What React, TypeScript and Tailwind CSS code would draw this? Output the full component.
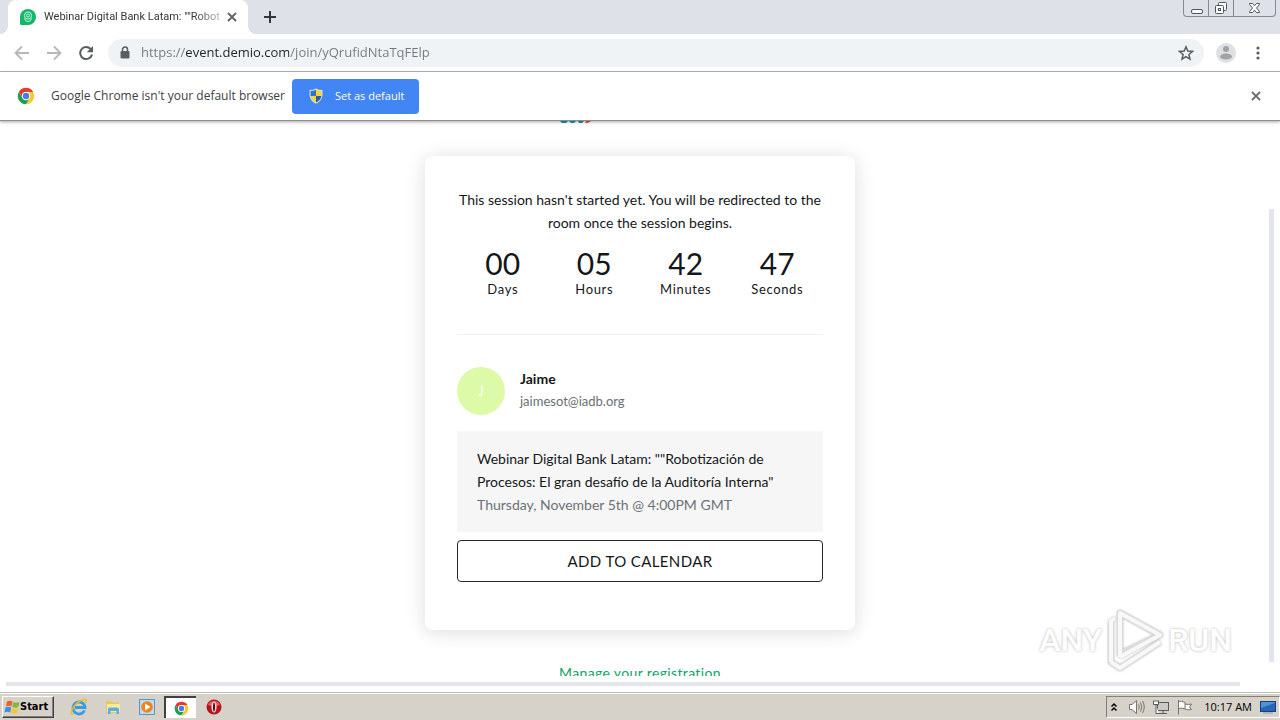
import React from "react";

const UI = "font-['Open_Sans','Noto_Sans',sans-serif]";

function ChromeLogo({ className }: { className: string }) {
  const sector = "M43.05 13H24A11 11 0 0 0 14.47 29.5L4.95 13A22 22 0 0 1 43.05 13Z";
  return (
    <svg viewBox="0 0 48 48" className={className} aria-hidden="true">
      <path d={sector} fill="#e33b2e" />
      <path d={sector} fill="#fcc934" transform="rotate(120 24 24)" />
      <path d={sector} fill="#1e9e50" transform="rotate(240 24 24)" />
      <circle cx="24" cy="24" r="11" fill="#fff" />
      <circle cx="24" cy="24" r="8.5" fill="#3f7fec" />
    </svg>
  );
}

function Cross({ className }: { className: string }) {
  return (
    <svg viewBox="0 0 10 10" className={className} fill="none" stroke="currentColor" strokeWidth="1.800" aria-hidden="true">
      <path d="M1 1L9 9M9 1L1 9" />
    </svg>
  );
}

function TabStrip() {
  return (
    <header className="flex h-[34px] shrink-0 bg-[#dee1e8]">
      <svg viewBox="0 0 8 8" className="size-2 self-end" aria-hidden="true">
        <path d="M8 0V8H0A8 8 0 0 0 8 0Z" fill="#fff" />
      </svg>
      <div className="flex w-60 items-center rounded-t-lg bg-white pl-3 pr-2.5">
        <svg viewBox="0 0 16 16" className="size-4 shrink-0" aria-hidden="true">
          <path d="M8 0A8 8 0 1 1 8 16H1.5Q0 16 0 14.500V8A8 8 0 0 1 8 0Z" fill="#12b76a" />
          <circle cx="8" cy="6.500" r="3.600" fill="none" stroke="#c9f2dc" strokeWidth="1" />
          <circle cx="8" cy="6.500" r="1.500" fill="none" stroke="#c9f2dc" strokeWidth="1" />
          <path d="M4.500 9.500Q5 12.500 8 12.500T11.500 9.500" fill="none" stroke="#c9f2dc" strokeWidth="1" />
        </svg>
        <span className="ml-2 whitespace-nowrap font-['Roboto',sans-serif] text-[11px] text-[#35363a] [mask-image:linear-gradient(to_right,#000_85%,rgba(0,0,0,0.3))]">
          Webinar Digital Bank Latam: ""Robot
        </span>
        <button type="button" aria-label="Close tab" className="ml-auto flex size-3 shrink-0 items-center justify-center text-[#5f6368]">
          <Cross className="size-2.5" />
        </button>
      </div>
      <svg viewBox="0 0 8 8" className="size-2 self-end" aria-hidden="true">
        <path d="M0 0V8H8A8 8 0 0 1 0 0Z" fill="#fff" />
      </svg>
      <button type="button" aria-label="New tab" className="ml-2 flex size-3 self-center text-[#35363a]">
        <svg viewBox="0 0 12 12" className="size-3" stroke="currentColor" strokeWidth="2" aria-hidden="true">
          <path d="M6 0V12M0 6H12" />
        </svg>
      </button>
      <div className="ml-auto mr-1 flex h-[17px] rounded-b border border-t-0 border-[#858a94] text-[#50545e]">
        <button type="button" aria-label="Minimize" className="flex w-[25px] items-center justify-center border-r border-[#858a94]">
          <svg viewBox="0 0 13 13" className="size-[13px]" aria-hidden="true">
            <rect x="1.500" y="7.500" width="11" height="4" rx="1.500" fill="#fff" stroke="currentColor" />
          </svg>
        </button>
        <button type="button" aria-label="Restore" className="flex w-[25px] items-center justify-center border-r border-[#858a94]">
          <svg viewBox="0 0 14 14" className="size-3.5" fill="#fff" stroke="currentColor" aria-hidden="true">
            <rect x="4.500" y="1.500" width="8" height="8" rx="1" />
            <rect x="1.500" y="4.500" width="8" height="8" rx="1" />
            <rect x="4.500" y="7.500" width="2" height="2" />
          </svg>
        </button>
        <button type="button" aria-label="Close" className="flex w-[41px] items-center justify-center">
          <svg viewBox="0 0 13 12" className="h-3 w-[13px]" fill="#fff" stroke="currentColor" aria-hidden="true">
            <path d="M1.500 1.500H4.500L6.500 3.800L8.500 1.500H11.500V2.500L8.500 6L11.500 9.500V10.500H8.500L6.500 8.200L4.500 10.500H1.500V9.500L4.500 6L1.500 2.500Z" />
          </svg>
        </button>
      </div>
    </header>
  );
}

function Toolbar() {
  return (
    <nav className="flex h-[38px] shrink-0 items-center border-b border-[#b4b7ba] bg-white px-3.5">
      <button type="button" aria-label="Back" className="text-[#b5b7ba]">
        <svg viewBox="0 0 16 16" className="size-4" fill="none" stroke="currentColor" strokeWidth="1.800" aria-hidden="true">
          <path d="M15 8H2M8 1.500L1.500 8L8 14.500" />
        </svg>
      </button>
      <button type="button" aria-label="Forward" className="ml-4 text-[#b5b7ba]">
        <svg viewBox="0 0 16 16" className="size-4" fill="none" stroke="currentColor" strokeWidth="1.800" aria-hidden="true">
          <path d="M1 8H14M8 1.500L14.500 8L8 14.500" />
        </svg>
      </button>
      <button type="button" aria-label="Reload" className="ml-4 text-[#5a5d61]">
        <svg viewBox="0 0 16 16" className="size-4" aria-hidden="true">
          <path d="M12.600 4A6 6 0 1 0 14 9.500" fill="none" stroke="currentColor" strokeWidth="2" />
          <path d="M15 1V7.200H8.800Z" fill="currentColor" />
        </svg>
      </button>
      <div className="ml-3.5 flex h-7 flex-1 items-center rounded-full bg-[#f0f3f5] pl-3 pr-2.5">
        <svg viewBox="0 0 10 13" className="h-[13px] w-2.5" aria-hidden="true">
          <rect x="0.500" y="5" width="9" height="7.500" rx="1" fill="#5a5d61" />
          <path d="M2.500 5.500V3.500A2.500 2.500 0 0 1 7.500 3.500V5.500" fill="none" stroke="#5a5d61" strokeWidth="1.500" />
        </svg>
        <input
          type="text"
          aria-label="Address"
          defaultValue="https://event.demio.com/join/yQrufidNtaTqFElp"
          className="ml-[11px] min-w-0 flex-1 bg-[linear-gradient(to_right,#74787d_44px,#202124_44px,#202124_148px,#74787d_148px)] bg-clip-text text-[13px] text-[#74787d] outline-none [-webkit-text-fill-color:transparent]"
        />
        <button type="button" aria-label="Bookmark this page" className="text-[#5a5d61]">
          <svg viewBox="0 0 16 16" className="size-4" fill="none" stroke="currentColor" strokeWidth="1.500" aria-hidden="true">
            <path d="M8 1.800L9.800 6.100L14.500 6.500L10.900 9.500L12 14.100L8 11.600L4 14.100L5.100 9.500L1.500 6.500L6.200 6.100Z" />
          </svg>
        </button>
      </div>
      <button type="button" aria-label="Profile" className="ml-3">
        <svg viewBox="0 0 20 20" className="size-5" aria-hidden="true">
          <circle cx="10" cy="10" r="10" fill="#dfe0e2" />
          <circle cx="10" cy="6" r="3" fill="#a0a2a5" />
          <ellipse cx="10" cy="13.500" rx="6" ry="3" fill="#a0a2a5" />
        </svg>
      </button>
      <button type="button" aria-label="Menu" className="ml-3.5 text-[#5a5d61]">
        <svg viewBox="0 0 16 16" className="size-4" fill="currentColor" aria-hidden="true">
          <circle cx="8" cy="3" r="1.600" />
          <circle cx="8" cy="8" r="1.600" />
          <circle cx="8" cy="13" r="1.600" />
        </svg>
      </button>
    </nav>
  );
}

function InfoBar() {
  return (
    <div className="z-10 flex h-[49px] shrink-0 items-center border-b border-[#8f8f8f] bg-white pl-[17px] pr-[19px] shadow-[0_1px_3px_rgba(0,0,0,0.35)]">
      <ChromeLogo className="size-[18px]" />
      <p className="ml-4 text-xs text-[#3c4043]">Google Chrome isn't your default browser</p>
      <button type="button" className="ml-[7px] flex h-[35px] w-[127px] items-center rounded bg-[#4285f4] pl-4 text-[11px] text-white">
        <svg viewBox="0 0 16 16" className="mr-[11px] size-4" aria-hidden="true">
          <path d="M8 0.500Q11 2 14.500 2V7Q14 13 8 15.800Q2 13 1.500 7V2Q5 2 8 0.500Z" fill="#dcdfd6" />
          <path d="M8 1.800V8H2.600V3Q5.500 3 8 1.800Z" fill="#2f74c8" />
          <path d="M8 1.800Q10.500 3 13.400 3V8H8Z" fill="#f8d33a" />
          <path d="M2.600 8H8V14.500Q3.200 12 2.600 8Z" fill="#f8d33a" />
          <path d="M8 8H13.400Q12.800 12 8 14.500Z" fill="#2560a8" />
        </svg>
        Set as default
      </button>
      <button type="button" aria-label="Dismiss" className="ml-auto text-[#6a6d70]">
        <Cross className="size-2.5" />
      </button>
    </div>
  );
}

const countdown = [
  { value: "00", label: "Days" },
  { value: "05", label: "Hours" },
  { value: "42", label: "Minutes" },
  { value: "47", label: "Seconds" },
];

function SessionCard() {
  return (
    <section className="w-full max-w-[430px] shrink-0 rounded-lg bg-white px-8 pb-12 pt-8 shadow-[0_2px_20px_rgba(0,0,0,0.14)]">
      <p className="text-center">This session hasn't started yet. You will be redirected to the room once the session begins.</p>
      <div className="mt-[13px] flex text-center">
        {countdown.map((c) => (
          <div key={c.label} className="flex-1">
            <div className="text-[30px] leading-8">{c.value}</div>
            <div className="text-[13px] leading-5 tracking-wider">{c.label}</div>
          </div>
        ))}
      </div>
      <hr className="mt-[35px] border-[#f0f0f0]" />
      <div className="mt-8 flex h-12 items-start">
        <span className="flex size-12 items-center justify-center rounded-full bg-[#dcfaa8] text-[13px] text-white">J</span>
        <div className="ml-[15px]">
          <div className="font-bold">Jaime</div>
          <div className="text-[13px] text-[#6b6f73]">jaimesot@iadb.org</div>
        </div>
      </div>
      <div className="mt-4 bg-[#f6f6f6] px-5 py-4">
        <h1>Webinar Digital Bank Latam: ""Robotización de Procesos: El gran desafío de la Auditoría Interna"</h1>
        <p className="text-[#6b7278]">Thursday, November 5th @ 4:00PM GMT</p>
      </div>
      <button type="button" className="mt-2 h-[42px] w-full rounded border border-[#25282b] text-[15px] tracking-wide">
        ADD TO CALENDAR
      </button>
    </section>
  );
}

function Watermark() {
  return (
    <div className="absolute bottom-5 right-12 flex items-center font-['Roboto',sans-serif] text-[32px] font-medium leading-[60px] text-white [text-shadow:0_0_3px_rgba(0,0,0,0.3)]">
      <span>ANY</span>
      <svg viewBox="0 0 58 64" className="mx-1 h-16 w-[58px] drop-shadow-[0_0_1px_rgba(0,0,0,0.3)]" fill="none" aria-hidden="true">
        <g stroke="#dcdcdc" strokeWidth="6" strokeLinejoin="round">
          <path d="M14 5V46L54 27Z" />
          <path d="M5 13V54L14 60L54 34" />
        </g>
        <g stroke="#f8f8f8" strokeWidth="4" strokeLinejoin="round">
          <path d="M5 54V13L9 10M5 54L14 60L54 34" />
          <path d="M14 49V5L54 27L14 49" />
        </g>
      </svg>
      <span>RUN</span>
    </div>
  );
}

function Page() {
  return (
    <main className="relative flex min-h-0 flex-1 flex-col bg-white font-['Lato','Open_Sans',sans-serif] text-sm leading-[23px] text-[#14171a]">
      <div className="flex min-h-0 flex-1 flex-col items-center overflow-hidden">
        <div className="flex h-[35px] w-40 shrink-0">
          <svg viewBox="0 0 32 2" className="h-0.5 w-8" aria-hidden="true">
            <path d="M0 0H8L6 2H2ZM9 0H16L14 2H11ZM18 0H24L22 2H19Z" fill="#1797b8" />
            <path d="M26 0H31L28 2H25Z" fill="#e8603c" />
          </svg>
        </div>
        <SessionCard />
        <a href="#registration" className="mt-[31px] shrink-0 tracking-wide text-[#12a36b]">
          Manage your registration
        </a>
      </div>
      <div className="h-4 shrink-0 pl-1.5 pr-10 pt-1.5">
        <div className="h-1 bg-[#e3e4ec]" />
      </div>
      <div className="absolute bottom-[30px] right-1.5 top-[88px] w-[5px] bg-[#e3e4ee]" />
      <Watermark />
    </main>
  );
}

function Taskbar() {
  return (
    <footer className="flex h-7 shrink-0 items-center border-t border-[#c2beb4] bg-[#d6d2ca] pt-px text-black shadow-[inset_0_1px_0_#fff]">
      <button
        type="button"
        className="ml-0.5 flex h-[22px] w-[52px] items-center border border-b-[#404040] border-l-white border-r-[#404040] border-t-white pl-px font-['DejaVu_Sans_Condensed','DejaVu_Sans',sans-serif] text-[11px] font-bold shadow-[inset_-1px_-1px_0_#848078]"
      >
        <svg viewBox="0 0 16 16" className="size-4 shrink-0" aria-hidden="true">
          <path d="M3 2.500Q6 1 8.500 2.500L7.500 7.500Q5 6 2 7.300Z" fill="#e8622c" />
          <path d="M9.300 3Q12 4.500 15.500 3L14.300 8Q11 9.500 8.300 8Z" fill="#7fb83b" />
          <path d="M1.700 8.300Q4.500 7 7.200 8.500L6.200 13.500Q3.500 12 0.500 13.300Z" fill="#3f8ede" />
          <path d="M8 9Q11 10.500 14 9L13 14Q10 15.500 7 14Z" fill="#f7c52e" />
        </svg>
        Start
      </button>
      <button type="button" aria-label="Internet Explorer" className="ml-4">
        <svg viewBox="0 0 18 18" className="size-[18px]" fill="none" aria-hidden="true">
          <path d="M14.500 12.500A6 6 0 1 1 15 9.500H5" stroke="#3a9be0" strokeWidth="2.800" />
          <path d="M3.500 15.500Q0.500 18 1.500 13Q4 6 11 2.500Q17.500 -0.500 16 5" stroke="#edb92e" strokeWidth="1.400" />
        </svg>
      </button>
      <button type="button" aria-label="Windows Explorer" className="ml-4">
        <svg viewBox="0 0 18 18" className="size-[18px]" aria-hidden="true">
          <path d="M2 3H7L8 4.500H15V15H2Z" fill="#e8c95c" />
          <path d="M3 6H16V14H3Z" fill="#fae99b" />
          <path d="M4 16V11Q4 9.500 6 9.500H13Q15 9.500 15 11V16H12.500V13H6.500V16Z" fill="#58b0e0" />
        </svg>
      </button>
      <button type="button" aria-label="Media Player" className="ml-4">
        <svg viewBox="0 0 18 18" className="size-[18px]" aria-hidden="true">
          <rect x="1.500" y="1.500" width="15" height="15" fill="#b9dcf3" stroke="#5a97c9" />
          <circle cx="9" cy="9" r="5.800" fill="#f08418" />
          <path d="M7 5.500L12.500 9L7 12.500Z" fill="#fff" />
        </svg>
      </button>
      <button
        type="button"
        aria-label="Google Chrome"
        className="ml-2 flex h-[22px] w-8 items-center justify-center border-l-2 border-t-2 border-[#404040] bg-white"
      >
        <ChromeLogo className="size-[15px]" />
      </button>
      <button type="button" aria-label="Opera" className="ml-2.5">
        <svg viewBox="0 0 16 16" className="size-4" aria-hidden="true">
          <circle cx="8" cy="8" r="7.500" fill="#b81420" />
          <path d="M2 6A6.500 6.500 0 0 1 14 6Q8 8 2 6Z" fill="#e0606a" />
          <ellipse cx="8" cy="8" rx="2.600" ry="5.500" fill="#f4d9da" />
          <ellipse cx="8" cy="8" rx="1" ry="4.600" fill="#5c0810" />
        </svg>
      </button>
      <div className="ml-auto flex h-[22px] items-center border border-b-white border-l-[#848078] border-r-white border-t-[#848078] px-[3px]">
        <svg viewBox="0 0 8 10" className="h-2.5 w-2" fill="none" stroke="#000" strokeWidth="1.500" aria-hidden="true">
          <path d="M1.500 4.500L4 2L6.500 4.500M1.500 8.500L4 6L6.500 8.500" />
        </svg>
        <svg viewBox="0 0 18 16" className="ml-2.5 h-4 w-[18px]" fill="none" stroke="#77756f" aria-hidden="true">
          <path d="M1.500 5.500H4L8.500 1.500V14.500L4 10.500H1.500Z" fill="#fff" />
          <path d="M10.500 5.500Q12 8 10.500 10.500M12.500 3.500Q15 8 12.500 12.500M14.500 2Q18 8 14.500 14" />
        </svg>
        <svg viewBox="0 0 18 16" className="ml-1.5 h-4 w-[18px]" fill="#fff" stroke="#5d5b56" aria-hidden="true">
          <rect x="5.500" y="3.500" width="11" height="8" fill="#c9c9c7" />
          <path d="M7 14.500H15M11 12V14" />
          <path d="M1.500 1.500V5.500H6.500V1.500M4 5.500V14.500H7M3 1V3M5 1V3" />
        </svg>
        <svg viewBox="0 0 18 16" className="ml-1.5 h-4 w-[18px]" fill="#fff" stroke="#77756f" aria-hidden="true">
          <path d="M2.500 1V15.500M2.500 2.500Q6 1.500 9 3.500V10Q6 8.500 2.500 9.500M9 5Q12 6 15.500 5L13.500 8L15.500 10.500Q12 11.500 9 10" />
        </svg>
        <time className="ml-2.5 text-[11px]">10:17 AM</time>
        <svg viewBox="0 0 16 14" className="ml-2 h-3.5 w-4" aria-hidden="true">
          <rect x="0.500" y="1.500" width="15" height="10" fill="#2766b5" stroke="#173f78" />
          <path d="M1 8L15 3V2H1Z" fill="#4c93dc" />
          <path d="M3 13H13" stroke="#8b99ab" />
        </svg>
      </div>
    </footer>
  );
}

export default function App() {
  return (
    <div className={`flex h-screen flex-col overflow-hidden ${UI}`}>
      <TabStrip />
      <Toolbar />
      <InfoBar />
      <Page />
      <Taskbar />
    </div>
  );
}
